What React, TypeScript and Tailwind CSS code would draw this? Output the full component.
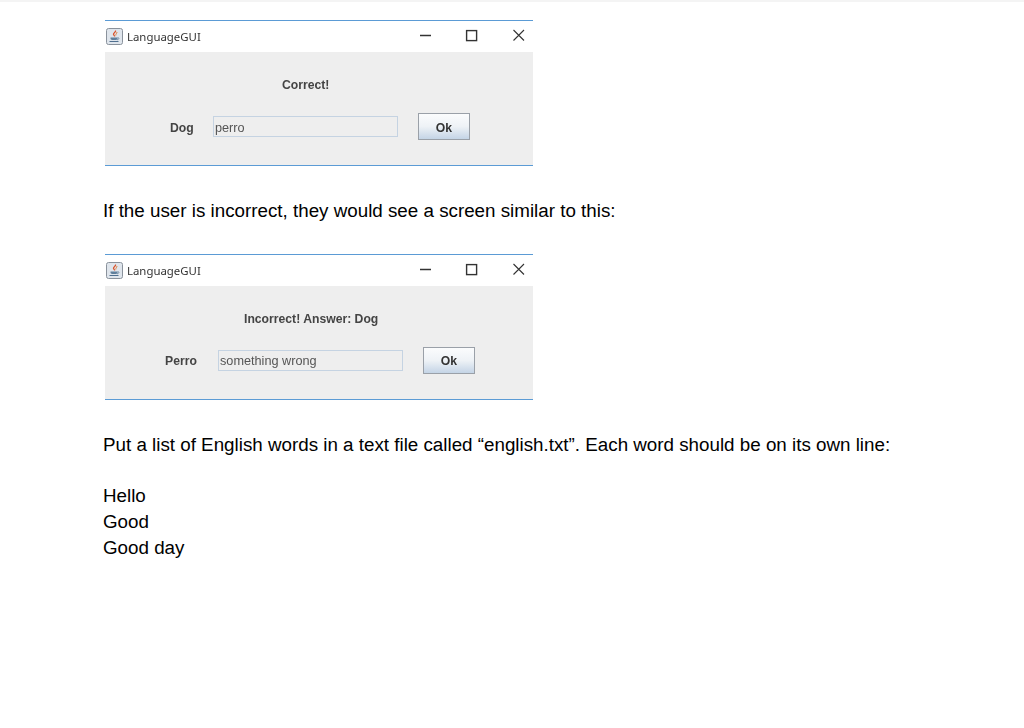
import React from "react";

function JavaIcon() {
  return (
    <svg width="17" height="17" viewBox="0 0 17 17" className="shrink-0 blur-[0.4px]">
      <rect x="0.5" y="0.5" width="16" height="16" rx="2" fill="#dfe5ec" stroke="#8a929c" />
      <path d="M9.5 2.5C10.5 4 7 5 7.5 6.5C7.8 7.5 9 7.5 8.5 8.5" fill="none" stroke="#d9532c" strokeWidth="1.3" />
      <path d="M11 4C11 5.5 9.5 6 9.8 7.5" fill="none" stroke="#e0803c" strokeWidth="1" />
      <path d="M4.5 9.5H11.5V10.5C11.5 11.5 10.5 12 8 12C5.5 12 4.5 11.5 4.5 10.5Z" fill="#5f7f9c" />
      <path d="M3.5 13.5H12.5" stroke="#4f6f8f" strokeWidth="1" />
      <path d="M11.5 9.8C13.5 9.3 13.5 11.5 11 11.8" fill="none" stroke="#5f7f9c" strokeWidth="0.8" />
    </svg>
  );
}

function WindowControls() {
  return (
    <svg width="105" height="14" viewBox="0 0 105 14" className="shrink-0 blur-[0.2px]">
      <path d="M0 7.5H11" stroke="#333" strokeWidth="1.5" />
      <rect x="46.6" y="2.6" width="10" height="10" fill="none" stroke="#333" strokeWidth="1.4" />
      <path d="M93.5 2L104 12.5M104 2L93.5 12.5" stroke="#333" strokeWidth="1.1" />
    </svg>
  );
}

function JavaWindow({
  message,
  messagePad,
  label,
  labelPad,
  labelWidth,
  value,
  textShift,
}: {
  message: string;
  messagePad: string;
  label: string;
  labelPad: string;
  labelWidth: string;
  value: string;
  textShift: string;
}) {
  return (
    <div className="ml-[2px] w-[428px] border-y border-[#5b9bd5] bg-white">
      <div className="flex h-[31px] items-center pl-[1px] pr-[8px]">
        <JavaIcon />
        <span className="ml-[4px] font-['Noto_Sans',sans-serif] text-[11.4px] text-[#333] blur-[0.25px]">LanguageGUI</span>
        <div className="ml-auto flex items-center pb-[3px]">
          <WindowControls />
        </div>
      </div>
      <div className="h-[113px] bg-[#eeeeee] font-bold text-[12.2px] text-[#444] font-['Liberation_Sans',sans-serif]">
        <div className={`h-[61px] pt-[25px] leading-[16px] blur-[0.25px] ${messagePad}`}>{message}</div>
        <div className={`flex items-center leading-[16px] ${labelPad}`}>
          <span className={`blur-[0.25px] ${labelWidth} ${textShift}`}>{label}</span>
          <div className={`flex h-[21px] w-[185px] items-center border border-[#c5d3e2] bg-[#eeeeee] pl-[1px] text-[12.7px] font-normal text-[#555] ${textShift}`}>
            <span className="blur-[0.25px]">{value}</span>
          </div>
          <div className={`ml-[20px] flex h-[27px] w-[52px] items-center justify-center border border-[#9aa0a8] bg-gradient-to-b from-[#fbfcfd] via-[#eef2f6] to-[#c4d4e6] text-[#333] ${textShift}`}>
            <span className="blur-[0.25px]">Ok</span>
          </div>
        </div>
      </div>
    </div>
  );
}

export default function App() {
  return (
    <div className="h-[728px] w-[1024px] overflow-hidden bg-white font-['Liberation_Sans',sans-serif] text-[18.8px] leading-[26px] text-black">
      <div className="h-[2px] bg-[#f4f4f4]" />
      <div className="pl-[103px] pt-[18px]">
        <JavaWindow
          message="Correct!"
          messagePad="pl-[177px]"
          label="Dog"
          labelPad="pl-[65px]"
          labelWidth="w-[43px]"
          value="perro"
          textShift="pt-[2px]"
        />
        <p className="mt-[32px]">If the user is incorrect, they would see a screen similar to this:</p>
        <div className="h-[30px]" />
        <JavaWindow
          message="Incorrect! Answer: Dog"
          messagePad="pl-[139px]"
          label="Perro"
          labelPad="pl-[60px]"
          labelWidth="w-[53px]"
          value="something wrong"
          textShift="pt-0"
        />
        <p className="mt-[32px]">Put a list of English words in a text file called “english.txt”. Each word should be on its own line:</p>
        <p className="mt-[25px]">Hello</p>
        <p>Good</p>
        <p>Good day</p>
      </div>
    </div>
  );
}
